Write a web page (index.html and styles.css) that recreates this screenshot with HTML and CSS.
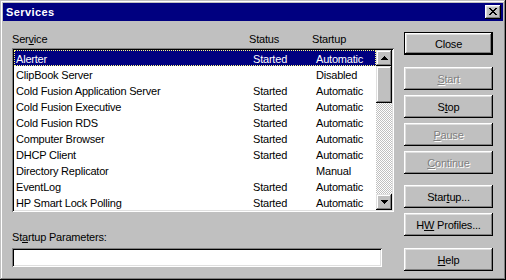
FILE: index.html
```html
<!DOCTYPE html>
<html lang="en">

<head>
    <meta charset="UTF-8">
    <meta name="viewport" content="width=device-width, initial-scale=1.0">
    <title>Services</title>
    <link rel="stylesheet" href="styles.css">
</head>

<body>

    <div class="window">
        <div class="titlebar">
            <span class="title">Services</span>
            <button class="title-close" aria-label="Close">
                <svg width="8" height="7" viewBox="0 0 8 7">
                    <path d="M0 0h2v1h1v1h2V1h1V0h2v1H7v1H6v1H5v1h1v1h1v1h1v1H6V6H5V5H3v1H2v1H0V6h1V5h1V4h1V3H2V2H1V1H0z" fill="#000" />
                </svg>
            </button>
        </div>

        <div class="dialog">
            <div class="main">
                <div class="list-header">
                    <span>Ser<u>v</u>ice</span>
                    <span>Status</span>
                    <span>Startup</span>
                </div>

                <div class="listbox">
                    <div class="rows">
                        <div class="row selected"><span>Alerter</span><span>Started</span><span>Automatic</span></div>
                        <div class="row"><span>ClipBook Server</span><span></span><span>Disabled</span></div>
                        <div class="row"><span>Cold Fusion Application Server</span><span>Started</span><span>Automatic</span></div>
                        <div class="row"><span>Cold Fusion Executive</span><span>Started</span><span>Automatic</span></div>
                        <div class="row"><span>Cold Fusion RDS</span><span>Started</span><span>Automatic</span></div>
                        <div class="row"><span>Computer Browser</span><span>Started</span><span>Automatic</span></div>
                        <div class="row"><span>DHCP Client</span><span>Started</span><span>Automatic</span></div>
                        <div class="row"><span>Directory Replicator</span><span></span><span>Manual</span></div>
                        <div class="row"><span>EventLog</span><span>Started</span><span>Automatic</span></div>
                        <div class="row"><span>HP Smart Lock Polling</span><span>Started</span><span>Automatic</span></div>
                    </div>
                    <div class="scrollbar">
                        <div class="scroll-btn">
                            <svg width="7" height="4" viewBox="0 0 7 4"><path d="M3 0h1v1h1v1h1v1h1v1H0V3h1V2h1V1h1z" fill="#000" /></svg>
                        </div>
                        <div class="scroll-thumb"></div>
                        <div class="scroll-track"></div>
                        <div class="scroll-btn">
                            <svg width="7" height="4" viewBox="0 0 7 4"><path d="M0 0h7v1H6v1H5v1H4v1H3V3H2V2H1V1H0z" fill="#000" /></svg>
                        </div>
                    </div>
                </div>

                <div class="param-label">St<u>a</u>rtup Parameters:</div>
                <div class="param-input"></div>
            </div>

            <div class="actions">
                <button class="btn default">Close</button>
                <button class="btn disabled gap-lg"><u>S</u>tart</button>
                <button class="btn">S<u>t</u>op</button>
                <button class="btn disabled"><u>P</u>ause</button>
                <button class="btn disabled"><u>C</u>ontinue</button>
                <button class="btn gap-md">Star<u>t</u>up...</button>
                <button class="btn">H<u>W</u> Profiles...</button>
                <button class="btn gap-lg"><u>H</u>elp</button>
            </div>
        </div>
    </div>

</body>

</html>
```

FILE: styles.css
```css
body {
    margin: 0;
    padding: 0;
    overflow: hidden;
    font-family: 'Liberation Sans', Arial, sans-serif;
    font-size: 11px;
    letter-spacing: -0.2px;
    color: #000;
}

.window {
    width: 506px;
    height: 280px;
    box-sizing: border-box;
    padding: 3px;
    background-color: #c0c0c0;
    box-shadow: inset -1px -1px #000, inset 1px 1px #c0c0c0,
        inset -2px -2px #808080, inset 2px 2px #fff;
    display: flex;
    flex-direction: column;
}

.titlebar {
    height: 18px;
    background-color: #000080;
    display: flex;
    align-items: center;
    justify-content: space-between;
    padding: 0 2px 0 3px;
}

.title {
    color: #fff;
    font-weight: bold;
    letter-spacing: 0.4px;
}

.title-close {
    width: 16px;
    height: 14px;
    padding: 0;
    border: none;
    background-color: #c0c0c0;
    box-shadow: inset -1px -1px #000, inset 1px 1px #fff,
        inset -2px -2px #808080, inset 2px 2px #dfdfdf;
    display: flex;
    align-items: center;
    justify-content: center;
}

.title-close svg {
    display: block;
    margin-top: -1px;
}

.dialog {
    flex: 1;
    display: flex;
    gap: 10px;
    padding: 11px 10px 0 9px;
}

.main {
    width: 382px;
    display: flex;
    flex-direction: column;
}

.list-header,
.row {
    display: grid;
    grid-template-columns: 237px 63px 1fr;
    white-space: nowrap;
}

.list-header {
    height: 16px;
    line-height: 14px;
}

.listbox {
    height: 164px;
    box-sizing: border-box;
    padding: 2px;
    background-color: #fff;
    box-shadow: inset 1px 1px #808080, inset -1px -1px #fff,
        inset 2px 2px #000, inset -2px -2px #dfdfdf;
    display: flex;
}

.rows {
    flex: 1;
}

.row {
    height: 16px;
    box-sizing: border-box;
    padding: 2px 0 0 2px;
    line-height: 14px;
}

.row.selected {
    background-color: #000080;
    color: #fff;
    outline: 1px dotted #ffff80;
    outline-offset: -1px;
}

.scrollbar {
    width: 16px;
    display: flex;
    flex-direction: column;
}

.scroll-btn,
.scroll-thumb {
    background-color: #c0c0c0;
    box-shadow: inset -1px -1px #000, inset 1px 1px #dfdfdf,
        inset -2px -2px #808080, inset 2px 2px #fff;
}

.scroll-btn {
    height: 16px;
    display: flex;
    align-items: center;
    justify-content: center;
}

.scroll-btn svg {
    display: block;
}

.scroll-thumb {
    height: 37px;
}

.scroll-track {
    flex: 1;
    background: repeating-conic-gradient(#c0c0c0 0 25%, #fff 0 50%) 0 0 / 2px 2px;
}

.param-label {
    margin-top: 18px;
    height: 14px;
    line-height: 14px;
}

.param-input {
    margin-top: 4px;
    width: 370px;
    height: 19px;
    background-color: #fff;
    box-shadow: inset 1px 1px #808080, inset -1px -1px #fff,
        inset 2px 2px #000, inset -2px -2px #dfdfdf;
}

.actions {
    width: 89px;
    display: flex;
    flex-direction: column;
    gap: 5px;
}

.btn {
    height: 23px;
    padding: 0;
    border: none;
    font: inherit;
    letter-spacing: inherit;
    color: #000;
    background-color: #c0c0c0;
    box-shadow: inset -1px -1px #000, inset 1px 1px #fff,
        inset -2px -2px #808080, inset 2px 2px #dfdfdf;
}

.btn.default {
    border: 1px solid #000;
}

.btn.disabled {
    color: #808080;
    text-shadow: 1px 1px 0 #fff;
}

.gap-lg {
    margin-top: 7px;
}

.gap-md {
    margin-top: 6px;
}
```
